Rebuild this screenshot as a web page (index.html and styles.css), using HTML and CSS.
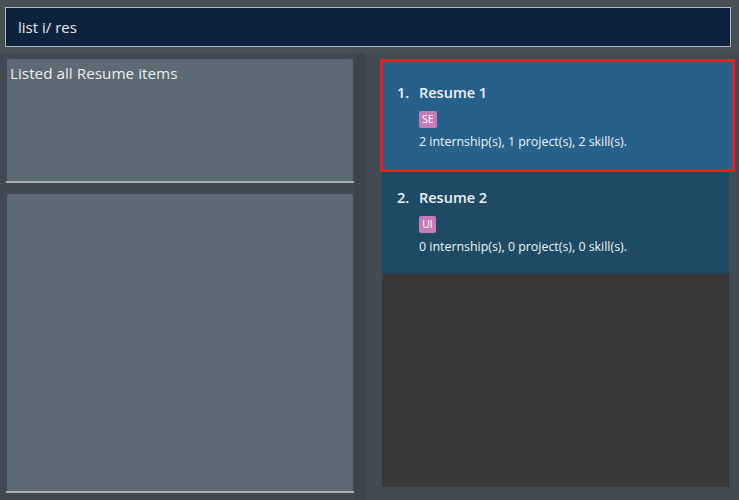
FILE: index.html
```html
<!DOCTYPE html>
<html>
<head>
<meta charset="utf-8">
<link rel="stylesheet" href="styles.css">
</head>
<body>
<div class="app">
  <div class="top">
    <div class="command">list i/ res</div>
  </div>
  <div class="main">
    <div class="left">
      <div class="result-wrap">
        <div class="result">Listed all Resume items</div>
      </div>
      <div class="detail-wrap">
        <div class="detail"></div>
      </div>
    </div>
    <div class="divider"></div>
    <div class="right">
      <div class="list">
        <div class="card selected">
          <div class="title"><span class="num">1.</span>Resume 1</div>
          <div class="tags"><span class="tag">SE</span></div>
          <div class="info">2 internship(s), 1 project(s), 2 skill(s).</div>
        </div>
        <div class="card">
          <div class="title"><span class="num">2.</span>Resume 2</div>
          <div class="tags"><span class="tag">UI</span></div>
          <div class="info">0 internship(s), 0 project(s), 0 skill(s).</div>
        </div>
        <div class="empty"></div>
      </div>
    </div>
  </div>
</div>
</body>
</html>
```
FILE: styles.css
```css
* { box-sizing: border-box; }
html, body { margin: 0; padding: 0; }
body {
  width: 739px;
  height: 500px;
  background: #3c444c;
  font-family: "Open Sans", "Noto Sans", sans-serif;
  overflow: hidden;
}
.app { width: 739px; height: 500px; display: flex; flex-direction: column; }
.top {
  background: #474f57;
  padding: 7px 8px 6px 5px;
  height: 53px;
}
.command {
  height: 40px;
  border: 1px solid #b3b6b9;
  background: #0f2340;
  color: #e8e8e8;
  font-size: 15px;
  padding: 0 12px;
  line-height: 38px;
}
.main { flex: 1; display: flex; }
.left {
  width: 354px;
  background: #404951;
  padding: 6px 0 7px 6px;
  display: flex;
  flex-direction: column;
}
.result-wrap {
  height: 124px;
  border-bottom: 2px solid #a9b0b6;
  padding: 0 1px;
}
.result {
  height: 100%;
  background: #5c6a73;
  border-radius: 2px;
  color: #eeeeee;
  font-size: 15.3px;
  padding: 3px 3px;
  line-height: 22px;
}
.detail-wrap {
  flex: 1;
  margin-top: 11px;
  border-bottom: 2px solid #a9b0b6;
  padding: 0 1px;
}
.detail { height: 100%; background: #5c6a73; border-radius: 2px; }
.divider { width: 12px; background: #3c454d; }
.right {
  flex: 1;
  background: #434c54;
  padding: 6px 10px 13px 16px;
  display: flex;
}
.list {
  flex: 1;
  display: flex;
  flex-direction: column;
  background: #383838;
}
.card {
  background: #1e4a66;
  height: 102px;
  padding: 16px 0 0 15px;
  color: #f2f2f2;
}
.card.selected {
  background: #26618b;
  border: 3px solid #ec1c24;
  margin: 0 -6px 0 -2px;
  height: 113px;
  padding: 21px 0 0 14px;
}
.title { font-size: 14.5px; font-weight: 600; line-height: 20px; color: #eef0f2; }
.num { display: inline-block; width: 22px; }
.tags { margin: 8px 0 0 22px; height: 17px; }
.tag {
  display: inline-block;
  background: #c67bb7;
  color: #ffffff;
  font-size: 10.5px;
  line-height: 17px;
  height: 17px;
  min-width: 17px;
  text-align: center;
  padding: 0 3px;
  border-radius: 2px;
  vertical-align: top;
}
.info { margin: 6px 0 0 22px; font-size: 12.4px; line-height: 16px; }
.empty { flex: 1; }
```
